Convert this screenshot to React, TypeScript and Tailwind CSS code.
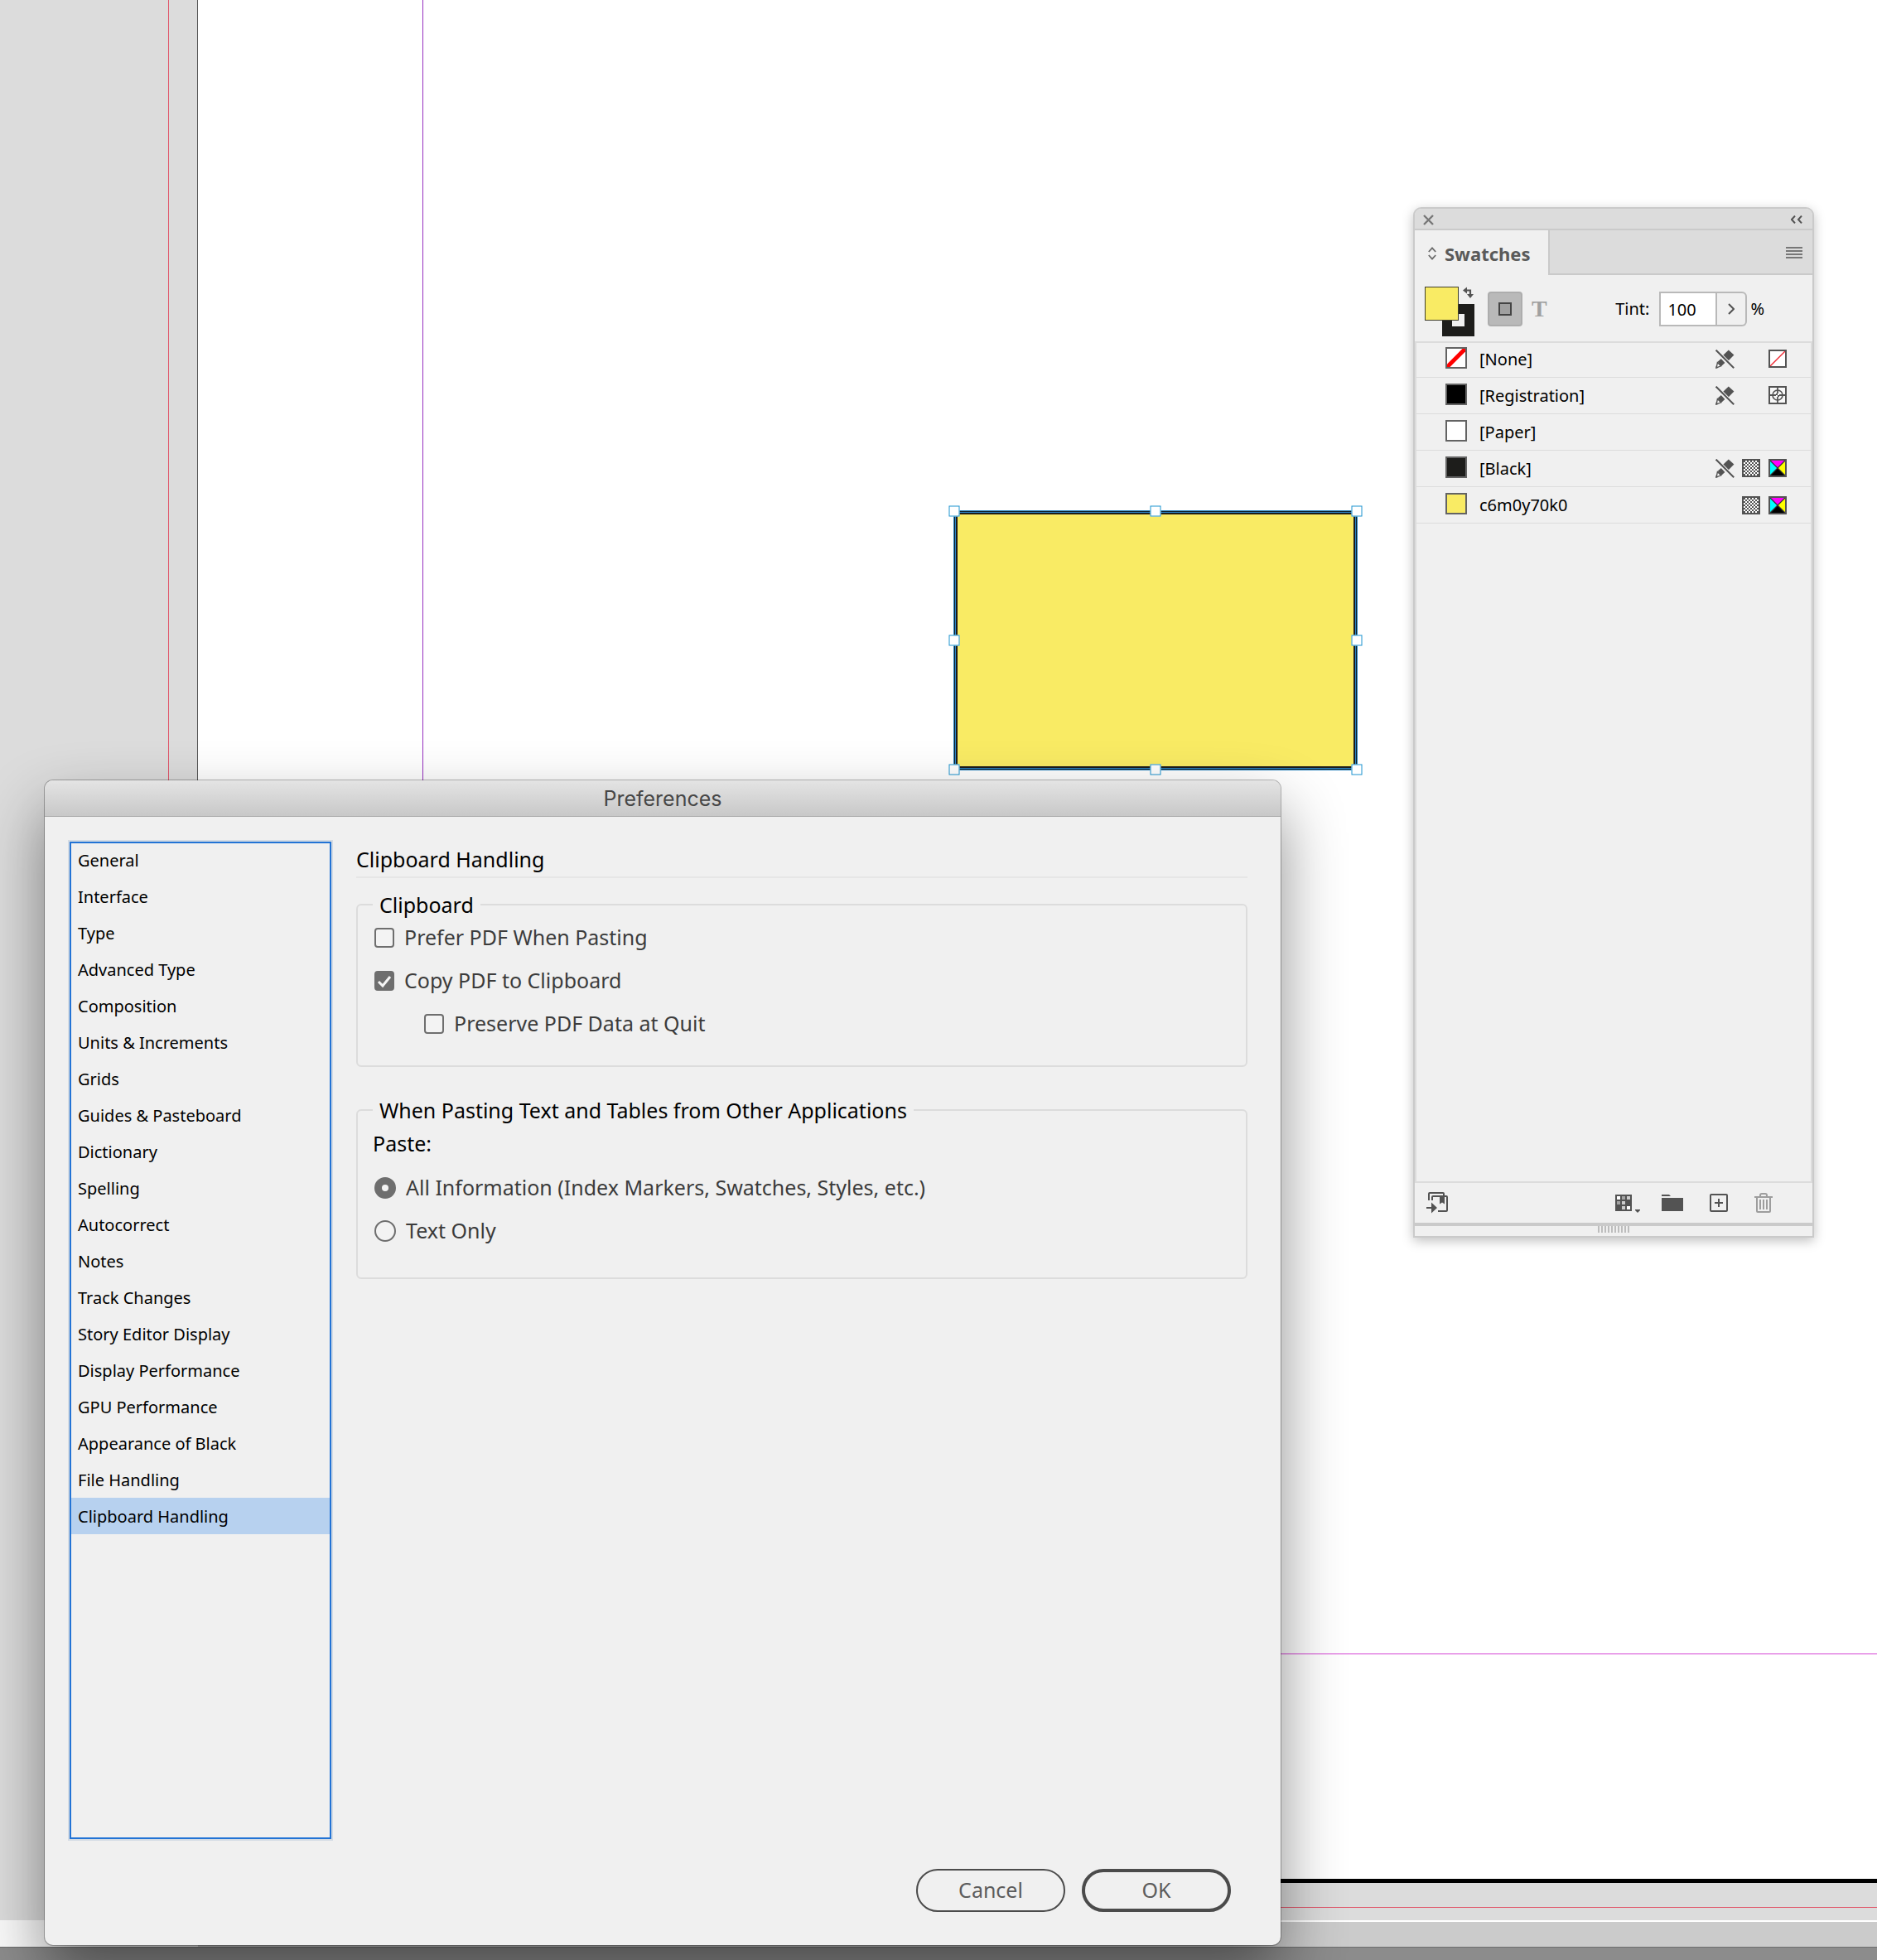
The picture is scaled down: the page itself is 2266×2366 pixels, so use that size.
import { useState } from "react";
import type { ReactNode } from "react";

const SECTIONS = [
  "General",
  "Interface",
  "Type",
  "Advanced Type",
  "Composition",
  "Units & Increments",
  "Grids",
  "Guides & Pasteboard",
  "Dictionary",
  "Spelling",
  "Autocorrect",
  "Notes",
  "Track Changes",
  "Story Editor Display",
  "Display Performance",
  "GPU Performance",
  "Appearance of Black",
  "File Handling",
  "Clipboard Handling",
];

type Swatch = {
  name: string;
  chip: string;
  none?: boolean;
  locked?: boolean;
  tint?: boolean;
  kind?: "none" | "registration" | "cmyk";
};

const SWATCHES: Swatch[] = [
  { name: "[None]", chip: "bg-white", none: true, locked: true, kind: "none" },
  { name: "[Registration]", chip: "bg-black", locked: true, kind: "registration" },
  { name: "[Paper]", chip: "bg-white" },
  { name: "[Black]", chip: "bg-[#1d1d1b]", locked: true, tint: true, kind: "cmyk" },
  { name: "c6m0y70k0", chip: "bg-[#f9eb64]", tint: true, kind: "cmyk" },
];

// Icons

function LockedIcon() {
  return (
    <svg width="23" height="23" viewBox="0 0 23 23" aria-hidden="true">
      <path d="M9 7 15.8 0.4 22.4 6.4 15.6 13.4Z" fill="#535353" />
      <path d="M2.6 14.8 6.8 11 11.4 16 7 20Z" fill="#535353" />
      <path d="M1.2 21.8 2.4 15.6 6.6 19.8Z" fill="#fff" stroke="#535353" strokeWidth="1.4" />
      <path d="M0 22.8 0.8 19.4 3.4 22Z" fill="#535353" />
      <path d="M1 1 22 22" stroke="#f0f0f0" strokeWidth="4" />
      <path d="M0.6 0.6 22.2 22.2" stroke="#535353" strokeWidth="2" />
    </svg>
  );
}

function TintIcon() {
  return (
    <svg width="22" height="22" viewBox="0 0 22 22" aria-hidden="true" shapeRendering="crispEdges">
      <defs>
        <pattern id="checker" width="4" height="4" patternUnits="userSpaceOnUse">
          <rect width="4" height="4" fill="#fff" />
          <rect width="2" height="2" fill="#535353" />
          <rect x="2" y="2" width="2" height="2" fill="#535353" />
        </pattern>
      </defs>
      <rect x="1" y="1" width="20" height="20" fill="url(#checker)" stroke="#535353" strokeWidth="2" />
    </svg>
  );
}

function KindIcon({ kind }: { kind: Swatch["kind"] }) {
  return (
    <svg width="22" height="22" viewBox="0 0 22 22" fill="none" aria-hidden="true">
      {kind === "none" && (
        <>
          <rect width="22" height="22" fill="#fff" />
          <path d="M2 20 20 2" stroke="#ee2b35" strokeWidth="1.5" />
        </>
      )}
      {kind === "registration" && (
        <>
          <rect width="22" height="22" fill="#f8f8f8" />
          <circle cx="11" cy="11" r="6" stroke="#535353" strokeWidth="1.6" />
          <path d="M11 1V21M1 11H21" stroke="#535353" strokeWidth="1.8" />
          <rect x="9" y="9" width="4" height="4" fill="#fff" />
          <path d="M9 9h2v2H9zM11 11h2v2h-2z" fill="#535353" />
        </>
      )}
      {kind === "cmyk" && (
        <>
          <path d="M0 0H22L11 11Z" fill="#ff00ff" />
          <path d="M22 0V22L11 11Z" fill="#ffff00" />
          <path d="M0 0V22L11 11Z" fill="#00ffff" />
          <path d="M0 22H22L11 11Z" fill="#000" />
          <path d="M1 1 21 21M21 1 1 21" stroke="#333" strokeWidth="1.2" />
        </>
      )}
      <rect x="1" y="1" width="20" height="20" stroke="#535353" strokeWidth="2" />
    </svg>
  );
}

function FillStrokeIcon() {
  return (
    <svg width="60" height="60" viewBox="0 0 60 60" fill="none" aria-hidden="true">
      <path d="M21 21H60V60H21ZM33 33V48H48V33Z" fill="#1d1d1b" fillRule="evenodd" />
      <rect x="33" y="33" width="15" height="15" fill="#f0f0f0" />
      <rect x="0.5" y="0.5" width="40" height="40" fill="#f9eb64" stroke="#3f3e2c" />
      <path d="M50 4.5H55V11" stroke="#535353" strokeWidth="2.2" />
      <path d="M51 0.5V8.5L46 4.5ZM51 9H59L55 14Z" fill="#535353" />
    </svg>
  );
}

function AddToLibraryIcon() {
  return (
    <svg width="26" height="26" viewBox="0 0 26 26" fill="none" aria-hidden="true">
      <path d="M3 10V2Q3 1 4 1H20Q21 1 21 2V5" stroke="#535353" strokeWidth="2" />
      <path d="M7 10V6Q7 5 8 5H24Q25 5 25 6V22Q25 23 24 23H14" stroke="#535353" strokeWidth="2" />
      <path d="M16 4H22V14.5L19 12.5 16 14.5Z" fill="#535353" />
      <path d="M0 18H6V12.5L13 19 6 25.5V20H0Z" fill="#535353" />
    </svg>
  );
}

function SwatchViewsIcon() {
  return (
    <svg width="24" height="24" viewBox="0 0 24 24" overflow="visible" aria-hidden="true">
      <rect y="2" width="20" height="20" fill="#535353" />
      <path d="M2 4h4v4H2zM14 16h4v4h-4z" fill="#fff" />
      <path d="M14 4h4v4h-4zM8 10h4v4H8zM8 16h4v4H8z" fill="#ccc" />
      <path d="M8 4h4v4H8zM2 10h4v4H2z" fill="#a3a3a3" />
      <path d="M24 20h6v1l-3 3-3-3z" fill="#535353" />
    </svg>
  );
}

function FolderIcon() {
  return (
    <svg width="26" height="20" viewBox="0 0 26 20" aria-hidden="true">
      <path d="M0 0H9L11 2H0ZM0 4H26V20H0Z" fill="#535353" />
    </svg>
  );
}

function NewSwatchIcon() {
  return (
    <svg width="22" height="22" viewBox="0 0 22 22" fill="none" stroke="#535353" strokeWidth="2" aria-hidden="true">
      <rect x="1" y="1" width="20" height="20" rx="1" />
      <path d="M11 6V16M6 11H16" />
    </svg>
  );
}

function TrashIcon() {
  return (
    <svg width="22" height="24" viewBox="0 0 22 24" fill="none" stroke="#9d9d9d" strokeWidth="2" aria-hidden="true">
      <path d="M0 5H22M7 5V3Q7 1 9 1H13Q15 1 15 3V5" />
      <path d="M3 5V22Q3 23 4 23H18Q19 23 19 22V5M7 8V20M11 8V20M15 8V20" />
    </svg>
  );
}

// Artwork frame with the selection handles on top

function Handle({ place }: { place: string }) {
  return (
    <span
      className={`absolute size-[13px] -translate-x-1/2 -translate-y-1/2 border border-[#1c93cf] bg-white ${place}`}
    />
  );
}

function SelectedFrame() {
  return (
    <div className="absolute left-[1151px] top-[616px] h-[314px] w-[488px] border border-[#2a84bd] bg-[#f9eb64]">
      <div className="size-full border border-[#10202a]">
        <div className="size-full border border-[#2a84c8]">
          <div className="size-full border-2 border-[#1d1d1b]" />
        </div>
      </div>
      <Handle place="left-0 top-0" />
      <Handle place="left-1/2 top-0" />
      <Handle place="left-full top-0" />
      <Handle place="left-0 top-1/2" />
      <Handle place="left-full top-1/2" />
      <Handle place="left-0 top-full" />
      <Handle place="left-1/2 top-full" />
      <Handle place="left-full top-full" />
    </div>
  );
}

function Canvas() {
  return (
    <div className="flex min-h-screen flex-col bg-[#dcdcdc]">
      <div className="flex grow">
        <div className="w-[239px] border-r border-[#555]" />
        <div className="grow border-b-[5px] border-black bg-white" />
      </div>
      <div className="h-[45px]" />
      <div className="flex h-8">
        <div className="w-[239px] bg-[#fafafa]" />
        <div className="grow border-t-2 border-white bg-[#cbcbcb]" />
      </div>
      <div className="h-4 border-t border-[#6e6e6e] bg-[#8c8c8c]" />
      {/* bleed and margin guides */}
      <div className="absolute left-[203px] top-0 h-[2302px] w-px bg-[#e0566a]" />
      <div className="absolute left-[203px] right-0 top-[2302px] h-px bg-[#e0566a]" />
      <div className="absolute left-[510px] top-0 h-[1996px] w-px bg-[#9630c0]" />
      <div className="absolute left-[510px] right-0 top-[1996px] h-px bg-[#d445d4]" />
    </div>
  );
}

// Swatches panel

function SwatchesPanel() {
  return (
    <section
      aria-label="Swatches"
      className="absolute left-[1706px] top-[250px] w-[484px] rounded-t-[10px] border-2 border-[#cacaca] bg-[#f0f0f0] text-[20px] leading-6 text-black shadow-[0_4px_14px_rgba(0,0,0,0.25)]"
    >
      <div className="flex h-[26px] items-center justify-between rounded-t-lg border-b-2 border-[#cacaca] bg-[#dcdcdc] pl-[10px] pr-3 pt-0.5">
        <button aria-label="Close">
          <svg width="13" height="13" viewBox="0 0 13 13" fill="none" stroke="#777" strokeWidth="2.4" aria-hidden="true">
            <path d="M1 1 12 12M12 1 1 12" />
          </svg>
        </button>
        <button aria-label="Collapse to icons">
          <svg width="14" height="10" viewBox="0 0 14 10" fill="none" stroke="#535353" strokeWidth="2" aria-hidden="true">
            <path d="M5 0.6 1 5 5 9.4M13 0.6 9 5 13 9.4" />
          </svg>
        </button>
      </div>

      <div className="flex h-[54px]">
        <div className="flex w-[163px] items-center gap-[10px] border-r-2 border-[#cacaca] pl-4 pt-0.5">
          <svg width="10" height="16" viewBox="0 0 10 16" fill="none" stroke="#6b6b6b" strokeWidth="1.8" aria-hidden="true">
            <path d="M0.8 6 5 1.4 9.2 6M0.8 10 5 14.6 9.2 10" />
          </svg>
          <h2 className="text-[22px] font-bold text-[#5a5a5a]">Swatches</h2>
        </div>
        <div className="flex grow items-center justify-end border-b-2 border-[#cacaca] bg-[#dcdcdc] pr-3 pt-0.5">
          <button aria-label="Panel menu">
            <svg width="20" height="14" viewBox="0 0 20 14" stroke="#777" strokeWidth="2" aria-hidden="true">
              <path d="M0 1H20M0 5H20M0 9H20M0 13H20" />
            </svg>
          </button>
        </div>
      </div>

      <div className="flex h-20 items-center pl-3 pt-0.5">
        <button aria-label="Fill and stroke" className="mt-1.5">
          <FillStrokeIcon />
        </button>
        <button
          aria-label="Formatting affects container"
          className="ml-4 grid size-[42px] place-items-center rounded border-2 border-[#adadad] bg-[#b9b9b9]"
        >
          <svg width="16" height="16" viewBox="0 0 16 16" aria-hidden="true">
            <rect x="1" y="1" width="14" height="14" fill="#a0a0a0" stroke="#444" strokeWidth="2" />
          </svg>
        </button>
        <button
          aria-label="Formatting affects text"
          className="ml-[11px] font-['Liberation_Serif',serif] text-[28px] font-bold text-[#a0a0a0]"
        >
          T
        </button>
        <div className="ml-auto mr-[58px] flex items-center">
          <label htmlFor="tint" className="mr-3">
            Tint:
          </label>
          <input
            id="tint"
            defaultValue="100"
            className="h-[42px] w-[70px] border-2 border-[#b9b9b9] bg-white pl-2 outline-none"
          />
          <button
            aria-label="Tint slider"
            className="grid h-[42px] w-9 place-items-center rounded-r-md border-2 border-l-0 border-[#b9b9b9]"
          >
            <svg width="8" height="14" viewBox="0 0 8 14" fill="none" stroke="#535353" strokeWidth="2" aria-hidden="true">
              <path d="M1 1 7 7 1 13" />
            </svg>
          </button>
          <span className="ml-1">%</span>
        </div>
      </div>

      <ul className="h-[1016px] border-2 border-[#dcdcdc]">
        {SWATCHES.map((s) => (
          <li
            key={s.name}
            className="flex h-11 items-center border-b border-[#dcdcdc] pl-[35px] pr-[29px] first:-mt-0.5"
          >
            <span className={`mb-1 size-[26px] border-2 border-[#636363] ${s.chip}`}>
              {s.none && (
                <svg width="22" height="22" viewBox="0 0 22 22" aria-hidden="true">
                  <path d="M0 22 22 0" stroke="#f00" strokeWidth="5" />
                </svg>
              )}
            </span>
            <span className="ml-[15px] grow">{s.name}</span>
            <span className="grid grid-cols-[22px_22px_22px] gap-[10px]">
              <span>{s.locked && <LockedIcon />}</span>
              <span>{s.tint && <TintIcon />}</span>
              <span>{s.kind && <KindIcon kind={s.kind} />}</span>
            </span>
          </li>
        ))}
      </ul>

      <div className="flex h-12 items-center gap-8 pl-[14px] pr-12">
        <button aria-label="Add to library" className="mr-auto">
          <AddToLibraryIcon />
        </button>
        <button aria-label="Swatch views">
          <SwatchViewsIcon />
        </button>
        <button aria-label="New color group">
          <FolderIcon />
        </button>
        <button aria-label="New swatch">
          <NewSwatchIcon />
        </button>
        <button aria-label="Delete swatch">
          <TrashIcon />
        </button>
      </div>

      <div className="flex h-4 justify-center border-t-4 border-[#cacaca]">
        <svg width="38" height="8" viewBox="0 0 38 8" stroke="#bdbdbd" strokeWidth="2" aria-hidden="true">
          <path d="M1 0V8M5 0V8M9 0V8M13 0V8M17 0V8M21 0V8M25 0V8M29 0V8M33 0V8M37 0V8" />
        </svg>
      </div>
    </section>
  );
}

// Preferences dialog

function Group({ title, className, children }: { title: string; className: string; children: ReactNode }) {
  return (
    <fieldset className={`rounded-md border-2 border-[#dcdcdc] px-[18px] pt-0.5 ${className}`}>
      <legend className="px-2 leading-6 text-black">{title}</legend>
      {children}
    </fieldset>
  );
}

function CheckRow({ label, checked, nested }: { label: string; checked?: boolean; nested?: boolean }) {
  return (
    <label className={`flex h-[52px] items-center gap-3 ${nested ? "pl-[62px]" : "pl-[2px]"}`}>
      <span className="relative size-6">
        <input
          type="checkbox"
          defaultChecked={checked}
          className="peer block size-6 appearance-none rounded border-2 border-[#6e6e6e] bg-[#f3f3f3] checked:bg-[#6e6e6e]"
        />
        <svg
          width="24"
          height="24"
          viewBox="0 0 24 24"
          fill="none"
          className="pointer-events-none absolute inset-0 hidden peer-checked:block"
          aria-hidden="true"
        >
          <path d="M5 13 10 18 19 7" stroke="#f5f5f5" strokeWidth="3" />
        </svg>
      </span>
      {label}
    </label>
  );
}

function RadioRow({ label, checked }: { label: string; checked?: boolean }) {
  return (
    <label className="flex h-[52px] items-center gap-3 pl-[2px]">
      <input
        type="radio"
        name="paste"
        defaultChecked={checked}
        className="size-[26px] appearance-none rounded-full border-2 border-[#6e6e6e] bg-[#f3f3f3] checked:border-[9px]"
      />
      {label}
    </label>
  );
}

function PreferencesDialog() {
  const [section, setSection] = useState("Clipboard Handling");

  return (
    <div
      role="dialog"
      aria-labelledby="prefs-title"
      className="absolute left-[54px] top-[942px] w-[1492px] rounded-[10px] bg-[#f0f0f0] text-[25px] text-[#3c3c3c] shadow-[0_0_0_1px_rgba(0,0,0,0.28),0_36px_76px_rgba(0,0,0,0.45)]"
    >
      <div className="flex h-11 items-center justify-center rounded-t-[10px] border-b border-[#a8a8a8] bg-linear-to-b from-[#e4e4e4] to-[#c8c8c8] pt-0.5">
        <h1 id="prefs-title" className="font-[Inter,sans-serif] text-[25px] text-[#474747]">
          Preferences
        </h1>
      </div>

      <div className="flex gap-[30px] pl-[30px] pr-10 pt-[30px]">
        <nav className="h-[1204px] w-[316px] border-2 border-[#2273d5] shadow-[0_0_0_2px_#d3dbe4]">
          <ul className="-mt-0.5 text-[20px] text-black">
            {SECTIONS.map((name) => (
              <li key={name}>
                <button
                  onClick={() => setSection(name)}
                  className={`block h-11 w-full pl-2 pt-0.5 text-left ${name === section ? "bg-[#b7d1ef]" : ""}`}
                >
                  {name}
                </button>
              </li>
            ))}
          </ul>
        </nav>

        <main className="grow">
          <h2 className="flex h-11 items-center border-b-2 border-[#e6e6e6] pt-0.5 text-black">{section}</h2>
          <Group title="Clipboard" className="mt-5 pb-6">
            <CheckRow label="Prefer PDF When Pasting" />
            <CheckRow label="Copy PDF to Clipboard" checked />
            <CheckRow label="Preserve PDF Data at Quit" nested />
          </Group>
          <Group title="When Pasting Text and Tables from Other Applications" className="mt-10 pb-[30px]">
            <p className="flex h-[54px] items-center text-black">Paste:</p>
            <RadioRow label="All Information (Index Markers, Swatches, Styles, etc.)" checked />
            <RadioRow label="Text Only" />
          </Group>
        </main>
      </div>

      <div className="flex justify-end gap-5 pb-10 pr-[60px] pt-9 text-[#5c5c5c]">
        <button className="h-[52px] w-[180px] rounded-full border-2 border-[#4b4b4b]">Cancel</button>
        <button className="h-[52px] w-[180px] rounded-full border-4 border-[#4b4b4b]">OK</button>
      </div>
    </div>
  );
}

export default function App() {
  return (
    <div className="relative min-h-screen overflow-hidden font-['Noto_Sans',sans-serif]">
      <Canvas />
      <SelectedFrame />
      <SwatchesPanel />
      <PreferencesDialog />
    </div>
  );
}
